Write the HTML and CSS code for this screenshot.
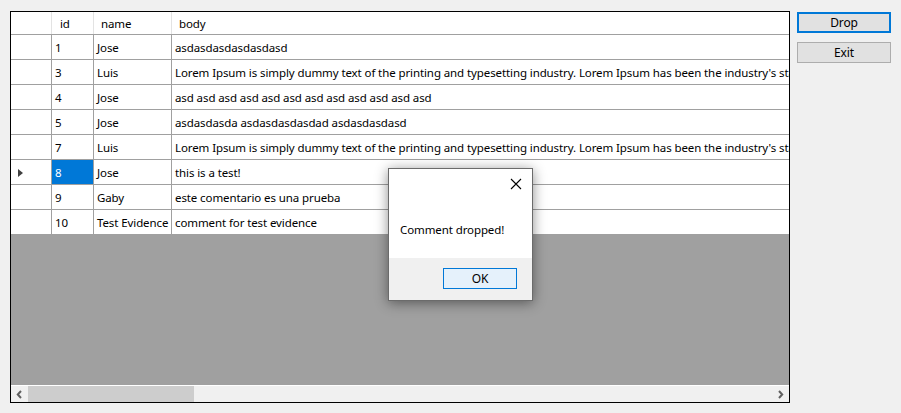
FILE: index.html
```html
<!DOCTYPE html>
<html>
<head>
<meta charset="utf-8">
<link rel="stylesheet" href="styles.css">
</head>
<body>
<div class="app">
  <div class="grid">
    <div class="rows">
      <div class="row header">
        <div class="c rh"></div>
        <div class="c id">id</div>
        <div class="c name">name</div>
        <div class="c body">body</div>
      </div>
      <div class="row"><div class="c rh"></div><div class="c id">1</div><div class="c name">Jose</div><div class="c body">asdasdasdasdasdasd</div></div>
      <div class="row"><div class="c rh"></div><div class="c id">3</div><div class="c name">Luis</div><div class="c body">Lorem Ipsum is simply dummy text of the printing and typesetting industry. Lorem Ipsum has been the industry's standard dummy text ever since the 1500s</div></div>
      <div class="row"><div class="c rh"></div><div class="c id">4</div><div class="c name">Jose</div><div class="c body">asd asd asd asd asd asd asd asd asd asd asd asd</div></div>
      <div class="row"><div class="c rh"></div><div class="c id">5</div><div class="c name">Jose</div><div class="c body">asdasdasda asdasdasdasdad asdasdasdasd</div></div>
      <div class="row"><div class="c rh"></div><div class="c id">7</div><div class="c name">Luis</div><div class="c body">Lorem Ipsum is simply dummy text of the printing and typesetting industry. Lorem Ipsum has been the industry's standard dummy text ever since the 1500s</div></div>
      <div class="row"><div class="c rh"><span class="arrow"></span></div><div class="c id sel">8</div><div class="c name">Jose</div><div class="c body">this is a test!</div></div>
      <div class="row"><div class="c rh"></div><div class="c id">9</div><div class="c name">Gaby</div><div class="c body">este comentario es una prueba</div></div>
      <div class="row"><div class="c rh"></div><div class="c id">10</div><div class="c name">Test Evidence</div><div class="c body">comment for test evidence</div></div>
    </div>
    <div class="fill"></div>
    <div class="hscroll">
      <div class="sbtn"><svg width="7" height="9" viewBox="0 0 7 9"><path d="M5 1 L1.8 4.5 L5 8" fill="none" stroke="#606060" stroke-width="2"/></svg></div>
      <div class="track"><div class="thumb"></div></div>
      <div class="sbtn"><svg width="7" height="9" viewBox="0 0 7 9"><path d="M2 1 L5.2 4.5 L2 8" fill="none" stroke="#606060" stroke-width="2"/></svg></div>
    </div>
  </div>
  <div class="side">
    <button class="btn primary">Drop</button>
    <button class="btn">Exit</button>
  </div>
</div>
<div class="dialog">
  <div class="dtop">
    <div class="dclose"><svg width="12" height="12" viewBox="0 0 12 12"><path d="M1 1 L11 11 M11 1 L1 11" stroke="#000" stroke-width="1.1"/></svg></div>
    <div class="dmsg">Comment dropped!</div>
  </div>
  <div class="dbottom">
    <button class="okbtn">OK</button>
  </div>
</div>
</body>
</html>
```
FILE: styles.css
```css
html, body {
  margin: 0;
  padding: 0;
  background: #f0f0f0;
  font-family: "Noto Sans", "Open Sans", sans-serif;
  font-size: 11.5px;
  letter-spacing: -0.1px;
  color: #000;
}
.app {
  display: flex;
  padding: 11px 0 0 10px;
}
.grid {
  width: 778px;
  height: 390px;
  border: 1px solid #000;
  background: #a0a0a0;
  display: flex;
  flex-direction: column;
  overflow: hidden;
}
.rows {
  background: #fff;
}
.row {
  display: flex;
  height: 24px;
  border-bottom: 1px solid #a0a0a0;
  white-space: nowrap;
}
.row.header {
  height: 22px;
}
.c {
  box-sizing: border-box;
  flex: none;
  display: flex;
  align-items: center;
  padding-left: 3px;
  padding-top: 1px;
  border-right: 1px solid #a0a0a0;
  overflow: hidden;
  line-height: 22px;
}
.header .c {
  border-right: 1px solid #e3e3e3;
  padding-left: 8px;
  padding-top: 1px;
}
.header .c.name, .header .c.body { padding-left: 7px; }
.rh { width: 41px; }
.id { width: 42px; }
.name { width: 78px; }
.body { width: 700px; border-right: none; overflow: visible; }
.sel { background: #0078d7; color: #fff; }
.arrow {
  width: 0; height: 0;
  border-top: 4px solid transparent;
  border-bottom: 4px solid transparent;
  border-left: 5px solid #404040;
  margin-left: 4px;
}
.fill { flex: 1; }
.hscroll {
  height: 17px;
  background: #f0f0f0;
  border-top: 1px solid #fff;
  display: flex;
  box-sizing: border-box;
}
.sbtn {
  width: 17px;
  flex: none;
  display: flex;
  align-items: center;
  justify-content: center;
}
.track { flex: 1; display: flex; }
.thumb { width: 166px; background: #cdcdcd; }
.side {
  display: flex;
  flex-direction: column;
  gap: 9px;
  margin-left: 7px;
  padding-top: 1px;
}
.btn {
  width: 94px;
  height: 21px;
  font-family: inherit;
  font-size: 12px;
  letter-spacing: -0.1px;
  background: #e1e1e1;
  border: 1px solid #adadad;
  padding: 0;
  color: #000;
}
.btn.primary { border: 2px solid #0078d7; }
.dialog {
  position: absolute;
  left: 388px;
  top: 168px;
  width: 143px;
  height: 131px;
  border: 1px solid #6b6b6b;
  background: #f0f0f0;
  box-shadow: 0 2px 12px rgba(0,0,0,0.45);
  display: flex;
  flex-direction: column;
}
.dtop {
  background: #fff;
  height: 89px;
  position: relative;
}
.dclose {
  position: absolute;
  right: 10px;
  top: 9px;
  width: 12px;
  height: 12px;
}
.dclose svg { display: block; }
.dmsg {
  padding: 53px 0 0 11px;
  line-height: 16px;
}
.dbottom {
  display: flex;
  justify-content: flex-end;
  padding: 10px 15px 0 0;
}
.okbtn {
  width: 74px;
  height: 21px;
  background: #e5f1fb;
  border: 1px solid #0078d7;
  font-family: inherit;
  font-size: 12px;
  letter-spacing: -0.1px;
  padding: 0;
  color: #000;
}
```
